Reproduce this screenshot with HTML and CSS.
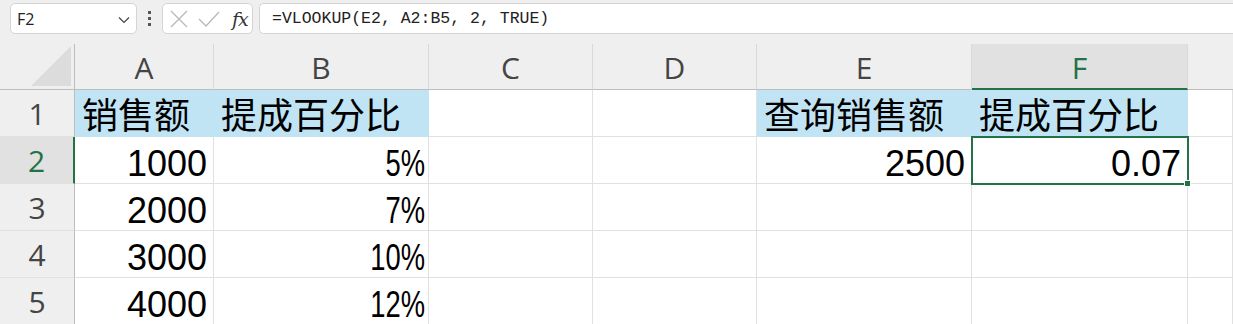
FILE: index.html
```html
<!DOCTYPE html>
<html lang="zh-CN">
<head>
    <meta charset="UTF-8">
    <title>VLOOKUP 提成百分比</title>
    <link rel="stylesheet" href="styles.css">
</head>
<body>
    <div class="toolbar">
        <div class="name-box">
            <span>F2</span>
            <svg class="chevron" width="12" height="8" viewBox="0 0 12 8"><path d="M1 1.5 L6 6.5 L11 1.5" fill="none" stroke="#444" stroke-width="1.2"/></svg>
        </div>
        <div class="grip"><i></i><i></i><i></i></div>
        <div class="fx-box">
            <svg width="18" height="18" viewBox="0 0 18 18"><path d="M1 1 L17 17 M17 1 L1 17" stroke="#b8b8b8" stroke-width="1.3"/></svg>
            <svg width="22" height="16" viewBox="0 0 22 16"><path d="M1 8 L8 15 L21 1" fill="none" stroke="#b8b8b8" stroke-width="1.3"/></svg>
            <span class="fx">fx</span>
        </div>
        <div class="formula">=VLOOKUP(E2, A2:B5, 2, TRUE)</div>
    </div>

    <div class="sheet">
        <div class="corner"><span class="tri"></span></div>
        <div class="col-head">A</div>
        <div class="col-head">B</div>
        <div class="col-head">C</div>
        <div class="col-head">D</div>
        <div class="col-head">E</div>
        <div class="col-head active">F</div>
        <div class="col-head last"></div>

        <div class="row-head">1</div>
        <div class="cell fill">销售额</div>
        <div class="cell fill">提成百分比</div>
        <div class="cell"></div>
        <div class="cell"></div>
        <div class="cell fill">查询销售额</div>
        <div class="cell fill">提成百分比</div>
        <div class="cell"></div>

        <div class="row-head active">2</div>
        <div class="cell num">1000</div>
        <div class="cell num pct-cell"><span class="pct">5%</span></div>
        <div class="cell"></div>
        <div class="cell"></div>
        <div class="cell num">2500</div>
        <div class="cell num selected">0.07<span class="handle"></span></div>
        <div class="cell"></div>

        <div class="row-head">3</div>
        <div class="cell num">2000</div>
        <div class="cell num pct-cell"><span class="pct">7%</span></div>
        <div class="cell"></div>
        <div class="cell"></div>
        <div class="cell"></div>
        <div class="cell"></div>
        <div class="cell"></div>

        <div class="row-head">4</div>
        <div class="cell num">3000</div>
        <div class="cell num pct-cell"><span class="pct">10%</span></div>
        <div class="cell"></div>
        <div class="cell"></div>
        <div class="cell"></div>
        <div class="cell"></div>
        <div class="cell"></div>

        <div class="row-head">5</div>
        <div class="cell num">4000</div>
        <div class="cell num pct-cell"><span class="pct">12%</span></div>
        <div class="cell"></div>
        <div class="cell"></div>
        <div class="cell"></div>
        <div class="cell"></div>
        <div class="cell"></div>
    </div>
</body>
</html>
```

FILE: styles.css
```css
* { box-sizing: border-box; }
body { margin: 0; background: #efefef; font-family: "Liberation Sans", "Noto Sans CJK SC", sans-serif; overflow: hidden; }

/* formula bar */
.toolbar { height: 44px; display: flex; align-items: flex-start; padding: 3px 0 0 10px; }
.name-box { width: 127px; height: 31px; background: #fff; border: 1px solid #d4d4d4; border-radius: 5px; display: flex; align-items: center; justify-content: space-between; padding: 0 6px 0 6px; font-family: "Open Sans", sans-serif; font-size: 16px; color: #222; }
.chevron { margin-top: 2px; }
.grip { width: 25px; height: 31px; display: flex; flex-direction: column; align-items: center; justify-content: center; gap: 3px; }
.grip i { display: block; width: 3px; height: 3px; background: #555; }
.fx-box { width: 91px; height: 31px; background: #fff; border: 1px solid #d4d4d4; border-radius: 5px; display: flex; align-items: center; padding: 0 0 0 7px; gap: 10px; }
.fx { font-family: "DejaVu Serif", "Liberation Serif", serif; font-style: italic; font-size: 19px; color: #333; margin-left: 2px; letter-spacing: -1px; }
.formula { flex: 1; height: 31px; margin-left: 6px; background: #fff; border: 1px solid #d4d4d4; border-right: none; border-radius: 5px 0 0 5px; padding: 0 0 0 12px; font-family: "Liberation Mono", "DejaVu Sans Mono", monospace; font-size: 16.5px; line-height: 29px; color: #222; }

/* grid */
.sheet { display: grid; grid-template-columns: 75px 139px 215px 164px 164px 215px 216px 1fr; grid-template-rows: 46px repeat(5, 47px); }
.corner { position: relative; border-right: 1px solid #bdbdbd; border-bottom: 1px solid #bdbdbd; }
.corner .tri { position: absolute; right: 3px; bottom: 3px; width: 40px; height: 40px; background: #dcdcdc; clip-path: polygon(100% 0, 100% 100%, 0 100%); }
.col-head { display: flex; align-items: center; justify-content: center; font-family: "Open Sans", sans-serif; font-size: 30px; color: #444; border-bottom: 1px solid #bdbdbd; border-right: 1px solid #d9d9d9; padding-top: 2px; }
.col-head.active { background: #e1e1e1; color: #217346; border-bottom: 2px solid #217346; padding-top: 3px; }
.col-head.last { border-right: none; }
.row-head { display: flex; align-items: center; justify-content: center; font-family: "Open Sans", sans-serif; font-size: 30px; color: #444; border-right: 1px solid #bdbdbd; border-bottom: 1px solid #e0e0e0; padding-top: 1px; }
.row-head.active { background: #e1e1e1; color: #217346; border-right: 2px solid #217346; }

.cell { position: relative; background: #fff; border-right: 1px solid #e1e1e1; border-bottom: 1px solid #e1e1e1; font-size: 36px; line-height: 1; color: #000; display: flex; align-items: flex-end; padding: 0 6px 1px 7px; white-space: nowrap; }
.cell.num { justify-content: flex-end; }
.cell.pct-cell { padding-right: 3px; }
.cell.fill { background: #c1e4f5; border-color: #c1e4f5; }
.cell.selected { outline: 2px solid #217346; outline-offset: -1px; z-index: 2; }
.pct { display: inline-block; transform: scaleX(0.76); transform-origin: right bottom; }
.handle { position: absolute; right: -4px; bottom: -4px; width: 7px; height: 7px; background: #217346; border: 1px solid #fff; }
```
